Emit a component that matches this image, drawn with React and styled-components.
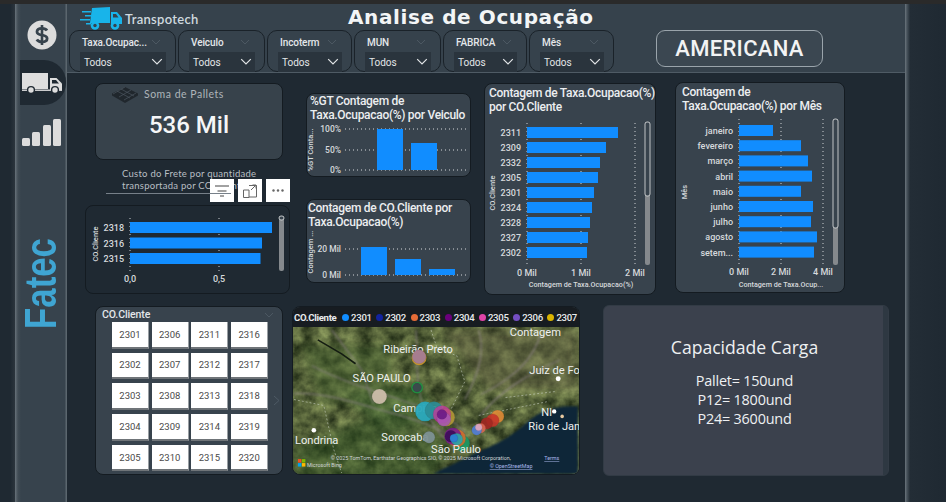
import React from 'react';
import styled, { createGlobalStyle } from 'styled-components';

const din = `Roboto, "Liberation Sans", sans-serif`;

const Global = createGlobalStyle`
  html, body { margin: 0; padding: 0; background: #1f2932; overflow: hidden; }
  * { box-sizing: border-box; }
`;

const Page = styled.div`
  width: 946px;
  height: 502px;
  display: flex;
  flex-direction: column;
  background: #1f2932;
  font-family: ${din};
  overflow: hidden;
`;
const TopStrip = styled.div`
  height: 4px;
  flex: none;
  background: #2a2a2a;
`;
const Body = styled.div`
  flex: 1;
  display: flex;
  min-height: 0;
`;
const LeftGutter = styled.div`
  width: 15px;
  flex: none;
  background: linear-gradient(90deg, #1f2932 0%, #1f2932 70%, #2c353d 100%);
`;
const Sidebar = styled.nav`
  width: 52px;
  flex: none;
  display: flex;
  flex-direction: column;
  background: linear-gradient(90deg, #68727a 0, #414c55 3px, #37434d 6px, #37434d 50px, #5b666e 51px);
`;
const IconSlot = styled.div`
  height: ${p => p.$h}px;
  margin-top: ${p => p.$top || 0}px;
  display: flex;
  align-items: center;
  justify-content: center;
  padding-left: 2px;
`;
const TruckTab = styled.div`
  height: 45px;
  margin: 10px 0 0 5px;
  width: 46px;
  display: flex;
  align-items: center;
  padding-left: 2px;
  background: #1f2932;
  border-radius: 0 22px 22px 0;
`;
const Fatec = styled.div`
  margin-top: 79px;
  align-self: center;
  writing-mode: vertical-rl;
  transform: rotate(180deg) scaleY(0.79);
  font: bold 44px "Liberation Sans", sans-serif;
  line-height: 34px;
  color: #3fa5d2;
`;
const Main = styled.main`
  width: 838px;
  flex: none;
  display: flex;
  flex-direction: column;
`;
const RightRail = styled.div`
  flex: 1;
  background: linear-gradient(90deg, #6b757d 0, #47525b 2px, #232d36 5px, #1f2932 100%);
`;
const Header = styled.header`
  height: 69px;
  flex: none;
  background: #36424c;
  border-bottom: 1px solid #4f5b65;
`;
const HeaderTop = styled.div`
  height: 26px;
  display: flex;
  align-items: center;
  padding-left: 13px;
`;
const Brand = styled.div`
  width: 119px;
  flex: none;
  display: flex;
  align-items: center;
  gap: 2px;
  font: 600 13px Lato, sans-serif;
  letter-spacing: 0.3px;
  color: #cfd9df;
  padding-top: 3px;
  white-space: nowrap;
  svg { flex: none; }
`;
const PageTitle = styled.h1`
  margin: 0 0 0 149px;
  font: bold 20px "DejaVu Sans", sans-serif;
  letter-spacing: 0.6px;
  color: #f3f5f6;
  white-space: nowrap;
`;
const FilterRow = styled.div`
  display: flex;
  align-items: flex-start;
  gap: 2px;
  padding-left: 2px;
`;
const FilterCard = styled.div`
  position: relative;
  width: ${p => p.$w}px;
  height: 42px;
  padding: 4px 9px 0 10px;
  border: 1px solid #1a2229;
  border-radius: 10px;
  background: #36424c;
`;
const FilterLabel = styled.div`
  display: flex;
  justify-content: space-between;
  align-items: center;
  height: 14px;
  padding: 0 5px 0 2px;
  font-size: 10px;
  font-weight: 500;
  letter-spacing: -0.1px;
  color: #e4e7ea;
`;
const FilterBox = styled.div`
  display: flex;
  justify-content: space-between;
  align-items: center;
  height: 20px;
  margin-top: 3px;
  padding: 0 3px 0 4px;
  background: #2a343d;
  font-size: 10px;
  color: #e3e6e8;
`;
const CityBox = styled.div`
  width: 167px;
  height: 37px;
  margin-left: 40px;
  display: flex;
  align-items: center;
  justify-content: center;
  border: 1px solid #9aa4ab;
  border-radius: 9px;
  background: #3b4751;
  font-size: 22px;
  font-weight: 500;
  letter-spacing: 0.3px;
  color: #f2f3f4;
`;
const Content = styled.div`
  flex: 1;
  display: flex;
  flex-direction: column;
  gap: 11px;
  padding: 10px 0 0 18px;
`;
const TopRow = styled.div`
  height: 212px;
  display: flex;
`;
const BottomRow = styled.div`
  display: flex;
  padding-left: 10px;
`;
const Column = styled.div`
  width: ${p => p.$w}px;
  margin-right: ${p => p.$mr || 0}px;
  margin-top: ${p => p.$mt || 0}px;
  flex: none;
  display: flex;
  flex-direction: column;
  gap: ${p => p.$gap || 0}px;
  padding-top: ${p => p.$pt || 0}px;
`;
const Kpi = styled.div`
  width: 188px;
  height: 77px;
  margin-left: 10px;
  display: flex;
  flex-direction: column;
  background: #37424b;
  border: 1px solid #141b21;
  border-radius: 8px;
`;
const KpiHead = styled.div`
  display: flex;
  align-items: flex-start;
  gap: 5px;
  padding: 3px 0 0 15px;
  height: 21px;
  font: 10.5px/10px Lato, sans-serif;
  letter-spacing: 0.5px;
  color: #aeb5ba;
  span { margin-top: 2px; }
`;
const KpiValue = styled.div`
  text-align: center;
  margin-top: 6px;
  font-size: 24px;
  font-weight: 500;
  color: #f5f6f7;
`;
const Caption = styled.div`
  position: relative;
  height: 45px;
  padding: 8px 0 0 37px;
  font: 9.5px/11.5px Lato, sans-serif;
  letter-spacing: 0.25px;
  color: #b9bfc4;
  &::after {
    content: '';
    position: absolute;
    left: 21px;
    width: 125px;
    top: 33px;
    height: 1px;
    background: #778089;
  }
`;
const VisualTools = styled.div`
  position: absolute;
  right: 0;
  top: 19px;
  display: flex;
  gap: 4px;
`;
const ToolButton = styled.div`
  width: 24px;
  height: 23px;
  display: flex;
  align-items: center;
  justify-content: center;
  background: #fff;
`;
const Card = styled.section`
  position: relative;
  width: ${p => p.$w}px;
  height: ${p => p.$h}px;
  flex: none;
  overflow: hidden;
  background: ${p => p.$bg || '#38434d'};
  border: 1px solid #141b21;
  border-radius: 8px;
`;
const CardTitle = styled.h2`
  margin: 0;
  height: ${p => p.$h}px;
  padding: ${p => p.$pad};
  font-size: 12px;
  line-height: 14px;
  font-weight: 500;
  letter-spacing: -0.3px;
  white-space: nowrap;
  color: #eceef0;
`;
const Plot = styled.svg`
  display: block;
`;
const AxisText = styled.text`
  font-family: ${din};
  font-weight: 500;
  font-size: ${p => p.$size || 9}px;
  fill: #d6d9dc;
`;
const MapLabels = styled.g`
  font-family: ${din};
  fill: #eef0ee;
  font-size: 11.2px;
`;
const MapCredit = styled.text`
  font-family: ${din};
  font-size: 5.4px;
  fill: ${p => p.$link ? '#a8b6e8' : '#d0d4d6'};
  text-decoration: ${p => p.$link ? 'underline' : 'none'};
`;
const SlicerCard = styled(Card)`
  margin-right: 9px;
`;
const SlicerTitle = styled.div`
  display: flex;
  justify-content: space-between;
  align-items: center;
  height: 15px;
  padding: 0 8px 0 6px;
  font-size: 10.5px;
  font-weight: 500;
  letter-spacing: -0.1px;
  color: #e4e7ea;
`;
const TileGrid = styled.div`
  display: grid;
  grid-template-rows: repeat(5, 26.5px);
  grid-template-columns: repeat(4, 37px);
  grid-auto-flow: column;
  column-gap: 2.7px;
  row-gap: 4.2px;
  margin: 0 0 0 16px;
`;
const Tile = styled.div`
  display: flex;
  align-items: center;
  justify-content: center;
  background: #fff;
  border-bottom: 2px solid #6f7478;
  border-right: 1px solid #9a9fa3;
  font-size: 9.5px;
  color: #4a4a4a;
`;
const NextArrow = styled.div`
  position: absolute;
  right: 2px;
  top: 84px;
`;
const MapCard = styled(Card)`
  margin-right: 23px;
  display: flex;
  flex-direction: column;
`;
const LegendBar = styled.div`
  height: 20px;
  flex: none;
  display: flex;
  align-items: center;
  gap: 4.6px;
  padding-left: 1px;
  background: #171c21;
  font-size: 9.6px;
  font-weight: 500;
  letter-spacing: -0.3px;
  color: #e9ebed;
  white-space: nowrap;
`;
const LegendTitle = styled.span`
  font-weight: 700;
  margin-right: 1px;
`;
const LegendItem = styled.span`
  display: flex;
  align-items: center;
  gap: 2px;
  &::before {
    content: '';
    width: 7px;
    height: 7px;
    border-radius: 50%;
    background: ${p => p.$c};
  }
`;
const CapacityCard = styled.section`
  width: 286px;
  height: 171px;
  margin-top: -1px;
  padding: 30px 3px 0 0;
  text-align: center;
  font-family: "Open Sans", sans-serif;
  color: #eef0f2;
  background: linear-gradient(90deg, #3b414d 0, #3b414d 279px, #2e3842 279px);
  border: 1px solid #323b45;
  border-radius: 6px;
`;
const CapacityTitle = styled.div`
  font-size: 17.6px;
  line-height: 22px;
  margin-bottom: 13px;
`;
const CapacityLine = styled.div`
  font-size: 14.4px;
  line-height: 19px;
  letter-spacing: -0.2px;
`;

const Chevron = ({ color = '#e3e6e8', size = 12 }) => (
  <svg width={size} height={size * 0.6} viewBox="0 0 10 6" fill="none" stroke={color} strokeWidth="1">
    <path d="M1 1l4 4 4-4" />
  </svg>
);

const LogoTruck = () => (
  <svg width="43" height="23" viewBox="0 0 43 23">
    <g fill="#18b4ea">
      <path d="M12 1l18-1v16H10z" />
      <path d="M31 5h6l5 6v6H31z" />
      <path d="M2 4h9v1.600H2zM5 8h6v1.600H5zM0 12h10v1.600H0zM6 16h5v1.400H6z" />
      <circle cx="15" cy="18.500" r="4.300" />
      <circle cx="35" cy="18.500" r="4.300" />
    </g>
    <circle cx="15" cy="18.500" r="1.700" fill="#36424c" />
    <circle cx="35" cy="18.500" r="1.700" fill="#36424c" />
    <path d="M33 7h3l2.500 3.500H33z" fill="#36424c" />
  </svg>
);

const DollarIcon = () => (
  <svg width="30" height="30" viewBox="0 0 30 30">
    <circle cx="15" cy="15" r="14.500" fill="#dcdcdc" />
    <path d="M20 10.500c-1-1.600-2.800-2.200-5-2.200-2.800 0-5 1.200-5 3.400 0 2.400 2.600 3 5 3.400 2.500.4 5.100 1 5.100 3.400 0 2.200-2.300 3.400-5.100 3.400-2.300 0-4.200-.7-5.200-2.400" fill="none" stroke="#37434d" strokeWidth="2.800" />
    <path d="M15 5v20" stroke="#37434d" strokeWidth="2.600" />
  </svg>
);

const TruckIcon = () => (
  <svg width="41" height="22" viewBox="0 0 41 22">
    <path d="M0 1h26v16H0z" fill="#dedede" />
    <path d="M28 6h6.500l5.500 5.500V18H28z" fill="#dedede" />
    <path d="M30 8h4l3 3.500h-7z" fill="#1f2932" />
    <rect x="0" y="17.500" width="40" height="1.400" fill="#dedede" />
    <circle cx="9" cy="18" r="3.400" fill="#dedede" stroke="#1f2932" strokeWidth="1.400" />
    <circle cx="33" cy="18" r="3.400" fill="#dedede" stroke="#1f2932" strokeWidth="1.400" />
  </svg>
);

const LevelsIcon = () => (
  <svg width="40" height="28" viewBox="0 0 40 28" fill="#dcdcdc">
    <rect x="0" y="19" width="8" height="8" rx="1.500" />
    <rect x="10" y="13" width="8" height="14" rx="1.500" />
    <rect x="21" y="6" width="8" height="21" rx="1.500" />
    <rect x="31" y="0" width="8" height="27" rx="1.500" />
  </svg>
);

const PalletIcon = () => (
  <svg width="28" height="17" viewBox="0 0 28 17">
    <path d="M14 0l13 6.500v2L14 16 1 8.500v-2z" fill="#20272d" />
    <path d="M6 4l13 7M10 2l13 7M2 7l12-7M8 10l12-7M13 13l12-7" stroke="#4a555e" strokeWidth="0.700" />
  </svg>
);

const FilterIcon = () => (
  <svg width="14" height="12" viewBox="0 0 14 12" stroke="#444" strokeWidth="1">
    <path d="M0 1h14M2.500 6h9M5 11h4" />
  </svg>
);
const FocusIcon = () => (
  <svg width="14" height="14" viewBox="0 0 14 14" fill="none" stroke="#666" strokeWidth="1">
    <path d="M6 1.500h7.500V13H6M.5 6v7.500H6V6H.5M8 6l5-5M9.500 1H13v3.500" />
  </svg>
);
const MoreIcon = () => (
  <svg width="12" height="3" viewBox="0 0 12 3" fill="#666">
    <circle cx="1.500" cy="1.500" r="1.200" />
    <circle cx="6" cy="1.500" r="1.200" />
    <circle cx="10.500" cy="1.500" r="1.200" />
  </svg>
);

// viewBox in page coordinates, so the reference can be read straight off
const HorizontalBars = ({ view, x0, ticks, rows, top, pitch, barH, axisY, gridTop, gridBottom, labelX, yTitle, xTitle, scroll }) => {
  const [, , vw, vh] = view;
  return (
    <Plot width={vw} height={vh} viewBox={view.join(' ')}>
      {ticks.map(t => (
        <line key={t.x} x1={t.x} x2={t.x} y1={gridTop} y2={gridBottom} stroke="#cfd3d6" strokeWidth="1" strokeDasharray="1 3" />
      ))}
      {rows.map((r, i) => (
        <g key={r.label}>
          <rect x={x0} y={top + i * pitch} width={r.end - x0} height={barH} fill="#118dff" />
          <AxisText x={labelX} y={top + i * pitch + barH - 2} textAnchor="end" $size={9}>{r.label}</AxisText>
        </g>
      ))}
      {ticks.map(t => (
        <AxisText key={t.label} x={t.x} y={axisY} textAnchor="middle" $size={9}>{t.label}</AxisText>
      ))}
      <AxisText transform={`translate(${yTitle.x} ${yTitle.y}) rotate(-90)`} textAnchor="middle" $size={7.5}>{yTitle.text}</AxisText>
      {xTitle && <AxisText x={xTitle.x} y={xTitle.y} textAnchor="middle" $size={7.2}>{xTitle.text}</AxisText>}
      <rect x={scroll.x} y={scroll.y} width="5" height={scroll.h} rx="2" fill="#85898d" />
      <rect x={scroll.x} y={scroll.y} width="5" height={scroll.thumb} rx="2" fill="#38434d" stroke="#d0d2d4" strokeWidth="0.900" />
    </Plot>
  );
};

const VerticalBars = ({ view, bars, lines, lineX, labelX, yTitle }) => {
  const [, , vw, vh] = view;
  return (
    <Plot width={vw} height={vh} viewBox={view.join(' ')}>
      {lines.map(l => (
        <g key={l.label}>
          <line x1={lineX} x2={469} y1={l.y} y2={l.y} stroke="#d6d9dc" strokeWidth="1" strokeDasharray="1 3" />
          <AxisText x={labelX} y={l.y + 3} textAnchor="end" $size={8.5}>{l.label}</AxisText>
        </g>
      ))}
      {bars.map(b => (
        <rect key={b.x} x={b.x} y={b.y} width="26" height={b.bottom - b.y} fill="#118dff" />
      ))}
      <AxisText transform={`translate(${yTitle.x} ${yTitle.y}) rotate(-90)`} textAnchor="middle" $size={7.5}>{yTitle.text}</AxisText>
    </Plot>
  );
};

const bubbles = [
  [418, 358, 7.500, '#d8a02a', .9], [418, 357, 7, '#a57c95', .95],
  [416, 388, 6, '#1f9a45', .9], [416, 388, 4.500, '#3b4a4c', 1],
  [378, 397, 7.500, '#cdbdaa', .95],
  [424, 412, 10, '#2aa9bd', .95], [433, 411, 9, '#2b8c96', .9],
  [445, 418, 9, '#c0a037', .8], [441, 415, 9, '#c23a9b', .8], [443, 420, 7, '#a655b5', .85], [441, 415, 5, '#6c1a86', .9],
  [428, 438, 6, '#7e9294', .95],
  [461, 444, 8, '#1a9a65', .9], [456, 439, 9, '#d86b2c', .85], [452, 437, 8.500, '#7b1f8c', .9], [450, 437, 6, '#3c0c5a', .9],
  [456, 440, 6, '#2ba8a8', .9], [453, 439, 4, '#2c7fd0', 1],
  [497, 417, 6.500, '#e08a35', .9], [492, 421, 6.500, '#c8362a', .9], [486, 424, 6, '#a32822', .9],
  [480, 429, 5, '#e06a55', .85], [476, 431, 5, '#4f7fe0', .85], [478, 428, 3.500, '#e2a9c0', .9],
];

const MapView = () => (
  <Plot width="286" height="148" viewBox="292 327 286 148">
    <defs>
      <filter id="land" x="0" y="0" width="100%" height="100%" colorInterpolationFilters="sRGB">
        <feTurbulence type="fractalNoise" baseFrequency="0.07" numOctaves="4" seed="11" />
        {/* one noise channel drives all three, otherwise it comes out as rainbow speckle */}
        <feColorMatrix values="0.6 0 0 0 0.03  0.62 0 0 0 0.07  0.4 0 0 0 0.02  0 0 0 0 1" />
      </filter>
      <filter id="soft" colorInterpolationFilters="sRGB"><feGaussianBlur stdDeviation="1" /></filter>
      <filter id="softer" colorInterpolationFilters="sRGB"><feGaussianBlur stdDeviation="5" /></filter>
    </defs>
    <rect x="292" y="327" width="286" height="148" filter="url(#land)" />
    <g filter="url(#softer)" opacity="0.45">
      <path d="M292 450l70-30 90 20-20 40H292z" fill="#2f5225" />
      <path d="M440 330h138v60h-90z" fill="#6e6a4c" />
      <path d="M300 345h90v50l-70 10z" fill="#4e6a36" />
      <path d="M340 395l80-10 20 40-60 5z" fill="#3f6a32" />
    </g>
    <path d="M578 407c-25-2-42 6-56 20-16 14-36 22-50 28-14 8-30 14-40 20h146z" fill="#0e2638" filter="url(#soft)" />
    <g filter="url(#soft)" fill="none" stroke="#8f8488" strokeWidth="1.300" opacity="0.75">
      <path d="M310 366c30 16 60 24 88 34s50 14 66 34" />
      <path d="M415 330c2 30-2 60 10 82s18 30 28 30" />
      <path d="M292 394c30-2 70 12 100 20s50 18 60 24" />
      <path d="M560 360c-30 14-60 30-80 56" />
      <path d="M540 335c-6 20-20 40-60 60" />
      <path d="M478 330c6 20 2 40-14 70" />
      <path d="M330 330l30 40 12 34" />
    </g>
    <path d="M316 340l24 14 14 10" stroke="#141c12" strokeWidth="1.600" fill="none" />
    <path d="M430 330l6 18 20 8 8 26-14 28M292 400l30 6 10 44 8 24M478 416l40-8 30-6M505 398l50-6" stroke="#cfd6c8" strokeWidth="0.800" strokeDasharray="2 2" fill="none" opacity="0.7" />
    <MapLabels>
      <text x="535" y="336" textAnchor="middle">Contagem</text>
      <text x="382" y="353">Ribeirão Preto</text>
      <text x="351" y="382">SÃO PAULO</text>
      <text x="529" y="374">Juiz de Fo</text>
      <text x="392" y="413">Campinas</text>
      <text x="380" y="442">Sorocaba</text>
      <text x="293" y="445">Londrina</text>
      <text x="528" y="431">Rio de Jan</text>
      <text x="541" y="417">Nl</text>
      <circle cx="558" cy="379" r="2.500" fill="#fff" />
      <circle cx="554" cy="412" r="2.200" fill="#fff" />
      <circle cx="562" cy="417" r="1.800" fill="#e8c9a0" />
      <circle cx="312" cy="431" r="2.300" fill="#fff" />
    </MapLabels>
    {bubbles.map(([cx, cy, r, fill, op], i) => (
      <circle key={i} cx={cx} cy={cy} r={r} fill={fill} opacity={op} stroke="#222" strokeOpacity="0.2" strokeWidth="0.500" />
    ))}
    <MapLabels>
      <text x="430" y="454">São Paulo</text>
    </MapLabels>
    <rect x="296" y="460" width="3.500" height="3.500" fill="#f25022" />
    <rect x="300" y="460" width="3.500" height="3.500" fill="#7fba00" />
    <rect x="296" y="464" width="3.500" height="3.500" fill="#00a4ef" />
    <rect x="300" y="464" width="3.500" height="3.500" fill="#ffb900" />
    <MapCredit x="305" y="467.500">Microsoft Bing</MapCredit>
    <MapCredit x="329" y="461">© 2025 TomTom, Earthstar Geographics SIO, © 2025 Microsoft Corporation,</MapCredit>
    <MapCredit x="544" y="461" $link>Terms</MapCredit>
    <MapCredit x="489" y="469" $link>© OpenStreetMap</MapCredit>
  </Plot>
);

const filters = [
  { label: 'Taxa.Ocupac...', w: 107 },
  { label: 'Veiculo', w: 87 },
  { label: 'Incoterm', w: 85 },
  { label: 'MUN', w: 87 },
  { label: 'FABRICA', w: 84 },
  { label: 'Mês', w: 85 },
];

const clientChart = {
  view: [485, 113, 170, 181], x0: 527, labelX: 521, top: 127, pitch: 15, barH: 11,
  gridTop: 123, gridBottom: 266, axisY: 276,
  ticks: [{ x: 527, label: '0 Mil' }, { x: 581, label: '1 Mil' }, { x: 635, label: '2 Mil' }],
  rows: [['2311', 618], ['2309', 606], ['2332', 600], ['2305', 598], ['2301', 594], ['2324', 592], ['2328', 590], ['2327', 588], ['2302', 587]].map(([label, end]) => ({ label, end })),
  yTitle: { text: 'CO.Cliente', x: 495, y: 193 },
  xTitle: { text: 'Contagem de Taxa.Ocupacao(%)', x: 581, y: 287 },
  scroll: { x: 645, y: 122, h: 143, thumb: 74 },
};

const monthChart = {
  view: [676, 112, 168, 180], x0: 739, labelX: 733, top: 125, pitch: 15.200, barH: 11,
  gridTop: 119, gridBottom: 265, axisY: 275,
  ticks: [{ x: 739, label: '0 Mil' }, { x: 781, label: '2 Mil' }, { x: 823, label: '4 Mil' }],
  rows: [['janeiro', 773], ['fevereiro', 801], ['março', 808], ['abril', 812], ['maio', 801], ['junho', 813], ['julho', 811], ['agosto', 817], ['setem...', 814]].map(([label, end]) => ({ label, end })),
  yTitle: { text: 'Mês', x: 687, y: 192 },
  xTitle: { text: 'Contagem de Taxa.Ocup...', x: 781, y: 287 },
  scroll: { x: 833, y: 119, h: 146, thumb: 109 },
};

const costChart = {
  view: [86, 206, 203, 87], x0: 130, labelX: 124, top: 222, pitch: 15.500, barH: 11,
  gridTop: 218, gridBottom: 272, axisY: 282,
  ticks: [{ x: 130, label: '0,0' }, { x: 219, label: '0,5' }],
  rows: [['2318', 272], ['2316', 262], ['2315', 260.500]].map(([label, end]) => ({ label, end })),
  yTitle: { text: 'CO.Cliente', x: 98, y: 244 },
  scroll: { x: 279, y: 216, h: 55, thumb: 4 },
};

const legend = [
  ['2301', '#118dff'], ['2302', '#12239e'], ['2303', '#e66c37'], ['2304', '#6b007b'],
  ['2305', '#e044a7'], ['2306', '#744ec2'], ['2307', '#d9b300'],
];

const tiles = Array.from({ length: 20 }, (_, i) => 2301 + i);

export default function App() {
  return (
    <Page>
      <Global />
      <TopStrip />
      <Body>
        <LeftGutter />
        <Sidebar>
          <IconSlot $h={30} $top={16}><DollarIcon /></IconSlot>
          <TruckTab><TruckIcon /></TruckTab>
          <IconSlot $h={28} $top={14}><LevelsIcon /></IconSlot>
          <Fatec>Fatec</Fatec>
        </Sidebar>
        <Main>
          <Header>
            <HeaderTop>
              <Brand><LogoTruck />Transpotech</Brand>
              <PageTitle>Analise de Ocupação</PageTitle>
            </HeaderTop>
            <FilterRow>
              {filters.map(f => (
                <FilterCard key={f.label} $w={f.w}>
                  <FilterLabel>{f.label}<Chevron color="#4c5862" size={10} /></FilterLabel>
                  <FilterBox>Todos<Chevron /></FilterBox>
                </FilterCard>
              ))}
              <CityBox>AMERICANA</CityBox>
            </FilterRow>
          </Header>
          <Content>
            <TopRow>
              <Column $w={205} $mr={16}>
                <Kpi>
                  <KpiHead><PalletIcon /><span>Soma de Pallets</span></KpiHead>
                  <KpiValue>536 Mil</KpiValue>
                </Kpi>
                <Caption>
                  Custo do Frete por quantidade<br />transportada por CO.Cliente
                  <VisualTools>
                    <ToolButton><FilterIcon /></ToolButton>
                    <ToolButton><FocusIcon /></ToolButton>
                    <ToolButton><MoreIcon /></ToolButton>
                  </VisualTools>
                </Caption>
                <Card $w={205} $h={89} $bg="#1f2932">
                  <HorizontalBars {...costChart} />
                </Card>
              </Column>
              <Column $w={165} $mr={13} $pt={10} $gap={22}>
                <Card $w={165} $h={84}>
                  <CardTitle $h={27} $pad="0 0 0 3px">%GT Contagem de<br />Taxa.Ocupacao(%) por Veiculo</CardTitle>
                  <VerticalBars
                    view={[307, 121, 163, 55]}
                    lineX={345}
                    labelX={341}
                    lines={[{ y: 129, label: '100%' }, { y: 150, label: '50%' }, { y: 170, label: '0%' }]}
                    bars={[{ x: 377, y: 129, bottom: 170 }, { x: 411, y: 143, bottom: 170 }]}
                    yTitle={{ text: '%GT Conta...', x: 313, y: 150 }}
                  />
                </Card>
                <Card $w={165} $h={84}>
                  <CardTitle $h={31} $pad="1px 0 0 1px">Contagem de CO.Cliente por<br />Taxa.Ocupacao(%)</CardTitle>
                  <VerticalBars
                    view={[307, 231, 163, 51]}
                    lineX={345}
                    labelX={341}
                    lines={[{ y: 249, label: '20 Mil' }, { y: 275, label: '0 Mil' }]}
                    bars={[{ x: 361, y: 247, bottom: 275 }, { x: 395, y: 259, bottom: 275 }, { x: 429, y: 269, bottom: 275 }]}
                    yTitle={{ text: 'Contagem ...', x: 313, y: 252 }}
                  />
                </Card>
              </Column>
              <Column $w={172} $mr={19}>
                <Card $w={172} $h={212}>
                  <CardTitle $h={29} $pad="2px 0 0 4px">Contagem de Taxa.Ocupacao(%)<br />por CO.Cliente</CardTitle>
                  <HorizontalBars {...clientChart} />
                </Card>
              </Column>
              <Column $w={170} $mt={-1}>
                <Card $w={170} $h={211}>
                  <CardTitle $h={29} $pad="2px 0 0 6px">Contagem de<br />Taxa.Ocupacao(%) por Mês</CardTitle>
                  <HorizontalBars {...monthChart} />
                </Card>
              </Column>
            </TopRow>
            <BottomRow>
              <SlicerCard $w={188} $h={169}>
                <SlicerTitle>CO.Cliente<Chevron color="#4c5862" size={10} /></SlicerTitle>
                <TileGrid>
                  {tiles.map(t => <Tile key={t}>{t}</Tile>)}
                </TileGrid>
                <NextArrow>
                  <svg width="7" height="11" viewBox="0 0 7 11" fill="none" stroke="#4e5a64" strokeWidth="1"><path d="M1 1l5 4.500-5 4.500" /></svg>
                </NextArrow>
              </SlicerCard>
              <MapCard $w={288} $h={169}>
                <LegendBar>
                  <LegendTitle>CO.Cliente</LegendTitle>
                  {legend.map(([n, c]) => <LegendItem key={n} $c={c}>{n}</LegendItem>)}
                  <svg width="5" height="8" viewBox="0 0 5 8" fill="#d5d8da"><path d="M0 0l5 4-5 4z" /></svg>
                </LegendBar>
                <MapView />
              </MapCard>
              <CapacityCard>
                <CapacityTitle>Capacidade Carga</CapacityTitle>
                <CapacityLine>Pallet= 150und</CapacityLine>
                <CapacityLine>P12= 1800und</CapacityLine>
                <CapacityLine>P24= 3600und</CapacityLine>
              </CapacityCard>
            </BottomRow>
          </Content>
        </Main>
        <RightRail />
      </Body>
    </Page>
  );
}
